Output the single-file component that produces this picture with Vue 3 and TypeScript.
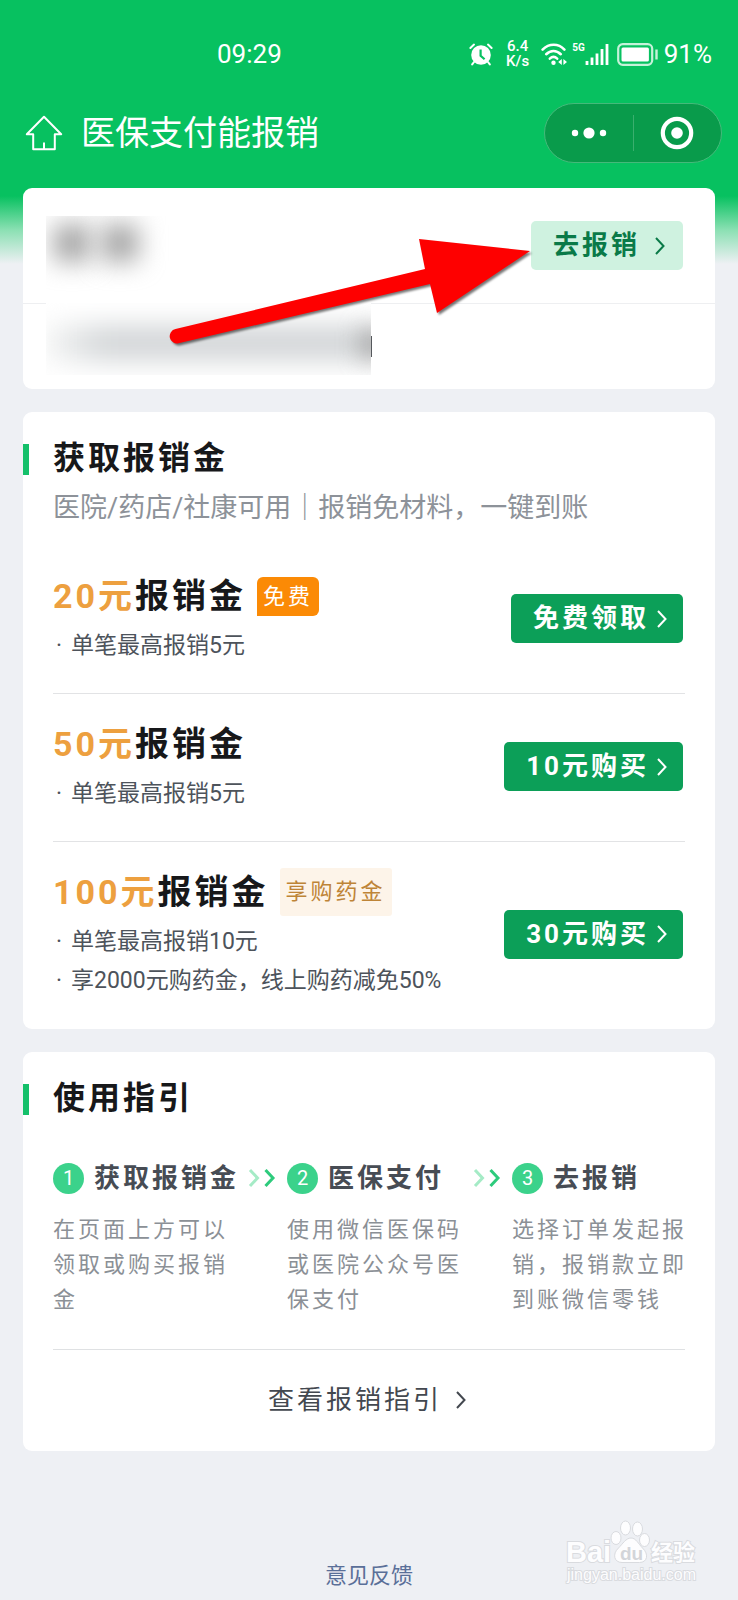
<script setup lang="ts">
interface Offer {
  amount: string
  tag?: { text: string; kind: 'solid' | 'soft' }
  notes: string[]
  action: string
}

interface Step {
  title: string
  text: string
}

const offers: Offer[] = [
  {
    amount: '20元',
    tag: { text: '免费', kind: 'solid' },
    notes: ['单笔最高报销5元'],
    action: '免费领取',
  },
  { amount: '50元', notes: ['单笔最高报销5元'], action: '10元购买' },
  {
    amount: '100元',
    tag: { text: '享购药金', kind: 'soft' },
    notes: ['单笔最高报销10元', '享2000元购药金，线上购药减免50%'],
    action: '30元购买',
  },
]

const steps: Step[] = [
  { title: '获取报销金', text: '在页面上方可以领取或购买报销金' },
  { title: '医保支付', text: '使用微信医保码或医院公众号医保支付' },
  { title: '去报销', text: '选择订单发起报销，报销款立即到账微信零钱' },
]
</script>

<template>
  <div class="page">
    <div class="status">
      <span class="time">09:29</span>
      <div class="indicators">
        <svg class="alarm" width="24" height="23" viewBox="0 0 24 23">
          <circle cx="12" cy="12" r="9.800" fill="#fff" />
          <path d="M1.400 5 5 1.600M22.600 5 19 1.600M5 19 3.200 21.400M19 19l1.800 2.400" stroke="#fff" stroke-width="2" stroke-linecap="round" />
          <path d="M11.600 6.500v6.200l4 3.600" fill="none" stroke="#07c160" stroke-width="2.200" />
        </svg>
        <div class="speed"><span>6.4</span><span>K/s</span></div>
        <svg class="wifi" width="27" height="23" viewBox="0 0 27 23">
          <g fill="none" stroke="#fff" stroke-width="2.600" stroke-linecap="round">
            <path d="M1.600 6.600C8 .2 17.400.2 23.400 6.600" />
            <path d="M5.200 11.200c4.400-4.200 10.200-4.200 14.600 0" />
            <path d="M8.800 15.600c2.200-2 5.200-2 7.400 0" />
          </g>
          <circle cx="12.500" cy="19.800" r="2.200" fill="#fff" />
          <path d="M20.800 16v6l-3.600-3zM22.400 16v6l3.600-3z" fill="#fff" />
        </svg>
        <div class="signal">
          <span class="net">5G</span>
          <svg width="24" height="22" viewBox="0 0 24 22">
            <path d="M2 18v4M7 14.500V22M12 10.500V22M17 6v16M22 1v21" stroke="#fff" stroke-width="2.800" />
          </svg>
        </div>
        <svg class="battery" width="41" height="23" viewBox="0 0 41 23">
          <rect x="1.200" y="1.200" width="34" height="20.600" rx="4.500" fill="none" stroke="#c5f2d9" stroke-width="2.200" />
          <rect x="4.500" y="4.500" width="27.400" height="14" rx="1.500" fill="#fff" />
          <path d="M39.500 6.500v10" stroke="#c5f2d9" stroke-width="2.400" />
        </svg>
        <span class="percent">91%</span>
      </div>
    </div>

    <header class="nav">
      <button class="home" type="button" aria-label="首页">
        <svg width="38" height="36" viewBox="0 0 38 36">
          <path d="M19 1.800 1.800 19.200h6.400v15h21.600v-15h6.400zM19 34v-6.500" fill="none" stroke="#fff" stroke-width="2" stroke-linejoin="round" />
        </svg>
      </button>
      <h1>医保支付能报销</h1>
      <div class="capsule">
        <button type="button" aria-label="更多">
          <svg width="36" height="12" viewBox="0 0 36 12" fill="#fff">
            <circle cx="4" cy="6" r="3.200" />
            <circle cx="18" cy="6" r="5.600" />
            <circle cx="32" cy="6" r="3.200" />
          </svg>
        </button>
        <button type="button" aria-label="关闭">
          <svg width="34" height="34" viewBox="0 0 34 34">
            <circle cx="17" cy="17" r="14.200" fill="none" stroke="#fff" stroke-width="4.200" />
            <circle cx="17" cy="17" r="5.800" fill="#fff" />
          </svg>
        </button>
      </div>
    </header>

    <main>
      <section class="card account">
        <div class="account-top">
          <div class="masked name"></div>
          <button class="claim" type="button">
            去报销
            <svg width="10" height="18" viewBox="0 0 10 18"><path d="m1 1 7.500 8L1 17" /></svg>
          </button>
        </div>
        <div class="account-bottom">
          <div class="masked number"></div>
          <i class="edge"></i>
        </div>
        <svg class="arrow" width="380" height="124" viewBox="160 226 380 124">
          <path d="M175.500 329 425 269 419 239 530 251 437 313 430 284 178.500 343.300A7.300 7.300 0 0 1 175.500 329Z" fill="#fe0000" />
        </svg>
      </section>

      <section class="card">
        <h2>获取报销金</h2>
        <p class="sub">医院/药店/社康可用｜报销免材料，一键到账</p>
        <div class="offers">
          <article v-for="offer in offers" :key="offer.amount" class="offer">
            <div class="info">
              <h3>
                <span><em>{{ offer.amount }}</em>报销金</span>
                <span v-if="offer.tag" class="tag" :class="offer.tag.kind">{{ offer.tag.text }}</span>
              </h3>
              <ul>
                <li v-for="note in offer.notes" :key="note">{{ note }}</li>
              </ul>
            </div>
            <button class="buy" type="button">
              {{ offer.action }}
              <svg width="10" height="18" viewBox="0 0 10 18"><path d="m1 1 7.500 8L1 17" /></svg>
            </button>
          </article>
        </div>
      </section>

      <section class="card">
        <h2>使用指引</h2>
        <ol class="steps">
          <li v-for="(step, i) in steps" :key="step.title">
            <div class="step-head">
              <span class="num">{{ i + 1 }}</span>
              <h4>{{ step.title }}</h4>
              <svg v-if="i < steps.length - 1" width="28" height="20" viewBox="0 0 28 20">
                <path d="m2 2 7.500 8L2 18" />
                <path d="m17.500 2 7.500 8-7.500 8" />
              </svg>
            </div>
            <p>{{ step.text }}</p>
          </li>
        </ol>
        <a class="guide" href="#guide">
          查看报销指引
          <svg width="10" height="18" viewBox="0 0 10 18"><path d="m1 1 7.500 8L1 17" /></svg>
        </a>
      </section>
    </main>

    <footer><a href="#feedback">意见反馈</a></footer>

    <svg class="mark" width="140" height="70" viewBox="0 0 140 70">
      <g fill="#fdfdfe" stroke="#d9dbdf" stroke-width="1">
        <text x="4" y="44" class="mark-name">Bai</text>
        <ellipse cx="54" cy="20" rx="5" ry="6.500" />
        <ellipse cx="63.500" cy="10" rx="5" ry="7" />
        <ellipse cx="75.500" cy="11" rx="5" ry="7" />
        <ellipse cx="82.500" cy="22" rx="5" ry="6.500" />
        <path d="M69 20c5 0 7.500 6 11.500 10 6.500 6 5 14.500-3 14.500H60c-8 0-10-8.500-3.500-14.500 4-4 7.500-10 12.500-10z" />
        <text x="89" y="42" class="mark-cn">经验</text>
        <text x="5" y="62" class="mark-url">jingyan.baidu.com</text>
      </g>
      <text x="58" y="42" class="mark-du">du</text>
    </svg>
  </div>
</template>

<style>
body {
  background: #eef0f4;
}
</style>

<style scoped>
.page {
  position: relative;
  box-sizing: border-box;
  min-height: 100vh;
  padding-bottom: 6px;
  overflow: hidden;
  background: linear-gradient(#07c160 196px, #8be0b3 230px, #eef0f4 264px);
  font-family: Roboto, "Noto Sans CJK SC", sans-serif;
  color: #17181a;
}

h1, h2, h3, h4, p, ul, ol {
  margin: 0;
  padding: 0;
  list-style: none;
}

button {
  margin: 0;
  padding: 0;
  border: 0;
  background: none;
  font: inherit;
  color: inherit;
  cursor: pointer;
}

a {
  color: inherit;
  text-decoration: none;
}

svg {
  display: block;
  flex: none;
}

.status {
  display: flex;
  align-items: center;
  justify-content: space-between;
  height: 36px;
  padding: 36px 26px 0 217px;
  font-size: 26px;
  color: #fff;
}

.indicators {
  display: flex;
  align-items: center;
}

.speed {
  display: flex;
  flex-direction: column;
  align-items: center;
  margin: 0 12px 0 13px;
  font-size: 15px;
  font-weight: 500;
  line-height: 15px;
}

.signal {
  display: flex;
  align-items: flex-start;
  margin: 0 8px 0 4px;
}

.net {
  font-size: 10px;
  font-weight: 700;
  line-height: 10px;
}

.percent {
  margin-left: 6px;
}

.nav {
  display: flex;
  align-items: center;
  height: 60px;
  margin-top: 31px;
  padding: 0 16px 0 25px;
  color: #fff;
}

h1 {
  flex: 1;
  margin-left: 18px;
  font-size: 34px;
  font-weight: 400;
  line-height: 48px;
}

.capsule {
  display: flex;
  box-sizing: border-box;
  width: 178px;
  height: 60px;
  padding: 11px 0;
  border: 1px solid #45b97a;
  border-radius: 30px;
  background: #099b4b;
}

.capsule button {
  display: flex;
  flex: 1;
  align-items: center;
  justify-content: center;
}

.capsule button + button {
  border-left: 1px solid #3aaf6e;
}

main {
  display: flex;
  flex-direction: column;
  gap: 23px;
  padding: 25px 23px 0;
}

.card {
  position: relative;
  padding: 23px 30px 1px;
  border-radius: 9px;
  background: #fff;
}

.account {
  padding: 0;
}

.account-top {
  display: flex;
  justify-content: space-between;
  height: 87px;
  padding: 28px 32px 0 23px;
  border-bottom: 1px solid #eeeff1;
}

.masked {
  position: relative;
  overflow: hidden;
  background: #fff;
}

.masked::before,
.masked::after {
  content: "";
  position: absolute;
  filter: blur(13px);
}

.name {
  width: 130px;
  height: 80px;
}

.name::before,
.name::after {
  top: 9px;
  left: 8px;
  width: 36px;
  height: 36px;
  background: #a0a0a0;
}

.name::after {
  left: 56px;
}

.claim,
.buy {
  display: flex;
  flex: none;
  align-items: center;
  height: 49px;
  border-radius: 5px;
  font-size: 26px;
  font-weight: 700;
  letter-spacing: 3px;
  line-height: 49px;
}

.claim {
  gap: 15px;
  margin-top: 5px;
  padding: 0 18px 0 22px;
  background: #cff2e0;
  color: #0a7a48;
}

.account-bottom {
  display: flex;
  align-items: center;
  height: 85px;
  padding-left: 23px;
}

.number {
  width: 325px;
  height: 72px;
  margin-top: -16px;
}

.number::before {
  top: 22px;
  right: 0;
  left: 0;
  height: 36px;
  background: linear-gradient(90deg, #f4f5f5, #d3d6d8 60px);
}

.number::after {
  top: 28px;
  right: -14px;
  width: 20px;
  height: 26px;
  background: #707070;
}

.edge {
  width: 1px;
  height: 21px;
  background: #55585c;
}

.arrow {
  position: absolute;
  top: 38px;
  right: 175px;
  filter: drop-shadow(2px 2px 1px #00000088);
}

h2 {
  position: relative;
  font-size: 32px;
  font-weight: 700;
  letter-spacing: 3px;
  line-height: 46px;
}

h2::before {
  content: "";
  position: absolute;
  top: 9px;
  left: -30px;
  width: 6px;
  height: 31px;
  background: #14c06a;
}

.sub {
  margin-top: 9px;
  font-size: 27px;
  line-height: 36px;
  color: #8d9299;
}

.offers {
  margin-top: 20px;
}

.offer {
  display: flex;
  align-items: center;
  justify-content: space-between;
  padding: 26px 2px 28px 0;
}

.offer + .offer {
  border-top: 1px solid #e2e3e5;
}

h3 {
  display: flex;
  align-items: center;
  gap: 11px;
  font-size: 34px;
  font-weight: 700;
  letter-spacing: 3px;
  line-height: 48px;
}

h3 em {
  font-style: normal;
  color: #eda03f;
}

.tag {
  padding: 0 6px;
  font-size: 22px;
  font-weight: 400;
}

.solid {
  border-radius: 6px 6px 6px 0;
  background: #fb8a05;
  line-height: 39px;
  color: #fff;
}

.soft {
  border-radius: 3px;
  background: #fdf4e9;
  color: #be8437;
}

.info ul {
  margin-top: 6px;
}

.info li {
  display: flex;
  font-size: 23px;
  line-height: 39px;
  color: #4d535b;
}

.info li::before {
  content: "·";
  width: 15px;
  padding-left: 3px;
}

.buy {
  gap: 8px;
  padding: 0 16px 0 22px;
  background: #0c9f58;
  color: #fff;
}

.claim path,
.buy path,
.guide path {
  fill: none;
  stroke: currentColor;
  stroke-width: 2;
}

.steps {
  display: grid;
  grid-template-columns: 234fr 225fr 179fr;
  margin: 35px -6px 0 0;
}

.step-head {
  display: flex;
  align-items: center;
  height: 44px;
  padding-right: 11px;
}

.num {
  width: 31px;
  height: 31px;
  border-radius: 50%;
  background: #3bd28b;
  font-size: 20px;
  line-height: 31px;
  text-align: center;
  color: #fff;
}

h4 {
  flex: 1;
  margin-left: 10px;
  font-size: 26px;
  font-weight: 700;
  letter-spacing: 3px;
  line-height: 44px;
  white-space: nowrap;
  color: #474c54;
}

.step-head path {
  fill: none;
  stroke: #a5ebc6;
  stroke-width: 3;
}

.step-head path:last-child {
  stroke: #2dcb7c;
}

.steps p {
  max-width: 178px;
  margin-top: 12px;
  font-size: 22px;
  letter-spacing: 3px;
  line-height: 35px;
  color: #8b9096;
}

.guide {
  display: flex;
  align-items: center;
  justify-content: center;
  gap: 14px;
  height: 100px;
  margin-top: 32px;
  padding-right: 4px;
  border-top: 1px solid #dfe1e3;
  font-size: 26px;
  letter-spacing: 3px;
  line-height: 100px;
  color: #43484f;
}

footer {
  margin-top: 109px;
  font-size: 22px;
  line-height: 32px;
  text-align: center;
  color: #5a6f98;
}

.mark {
  position: absolute;
  right: 36px;
  bottom: 12px;
}

.mark text {
  paint-order: stroke;
  stroke-width: 2px;
}

.mark-name {
  font: 700 29px "Liberation Sans", sans-serif;
}

.mark-cn {
  font: 700 22px "Noto Sans CJK SC", sans-serif;
}

.mark-url {
  font: 16px "Liberation Sans", sans-serif;
}

.mark-du {
  fill: #d3d5d9;
  font: 700 19px "Liberation Sans", sans-serif;
}
</style>
